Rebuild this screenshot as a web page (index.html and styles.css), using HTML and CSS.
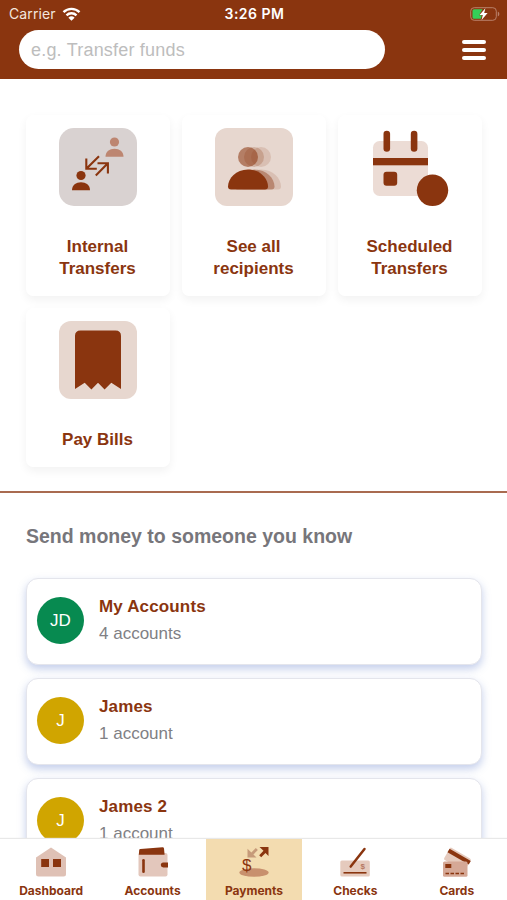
FILE: index.html
```html
<!DOCTYPE html>
<html lang="en">

<head>
    <meta charset="UTF-8">
    <meta name="viewport" content="width=device-width, initial-scale=1.0">
    <title>Payments</title>
    <link rel="stylesheet" href="styles.css">
</head>

<body>
    <header class="header">
        <div class="status-bar">
            <div class="carrier">
                <span>Carrier</span>
                <svg width="19" height="14" viewBox="0 0 18 14" fill="none" stroke="#fff" stroke-width="2.4">
                    <path d="M1 5.1a11.5 11.5 0 0 1 16 0" />
                    <path d="M4 8.3a7.2 7.2 0 0 1 10 0" />
                    <path d="M9 13.8L5.9 10.7a4.5 4.5 0 0 1 6.2 0z" fill="#fff" stroke="none" />
                </svg>
            </div>
            <div class="time">3:26 PM</div>
            <svg class="battery" width="30" height="14" viewBox="0 0 30 14">
                <rect x=".7" y=".7" width="25.6" height="12.6" rx="3.5" fill="none" stroke="#b9806a" />
                <path d="M27.8 4.6v4.8q1.6-.8 1.6-2.4t-1.6-2.4z" fill="#b9806a" />
                <path d="M4 2.3h8.5L9 8.2h2.8l-1 3.5H4a1.5 1.5 0 0 1-1.5-1.5V3.8A1.5 1.5 0 0 1 4 2.3z" fill="#34d058" />
                <path d="M15.4 1.2L9.5 8h3.3l-1.2 5 6-7h-3.4z" fill="#fff" />
            </svg>
        </div>
        <div class="search-row">
            <input class="search" type="text" placeholder="e.g. Transfer funds">
            <button class="menu" aria-label="Menu">
                <span></span>
                <span></span>
                <span></span>
            </button>
        </div>
    </header>

    <main class="content">
        <section class="tiles">
            <div class="tile">
                <svg width="78" height="78" viewBox="0 0 78 78">
                    <rect width="78" height="78" rx="15" fill="#d9d2d1" />
                    <g fill="#bd8671">
                        <circle cx="55.5" cy="14" r="4.6" />
                        <path d="M46.5 28.7c0-5.2 4-8 9-8s9 2.8 9 8z" />
                    </g>
                    <g fill="#8a350f">
                        <circle cx="22" cy="47.5" r="4.6" />
                        <path d="M13 62.2c0-5.2 4-8 9-8s9 2.8 9 8z" />
                    </g>
                    <g fill="none" stroke="#8a350f" stroke-width="2.1">
                        <path d="M40 28.2L27.6 40.6M27.3 30.5v10.3h10.5" />
                        <path d="M36.8 47.4L48.6 35.4M38.5 35.2h10.4v10.4" />
                    </g>
                </svg>
                <div class="tile-label">Internal<br>Transfers</div>
            </div>
            <div class="tile">
                <svg width="78" height="78" viewBox="0 0 78 78">
                    <rect width="78" height="78" rx="12" fill="#e7d7cf" />
                    <g fill="#8a350f">
                        <g opacity=".14">
                            <circle cx="46" cy="29" r="10" />
                            <path d="M26 58.5c0-8 8-17 20-17s20 9 20 17q0 3-3 3H29q-3 0-3-3z" />
                        </g>
                        <circle cx="39" cy="29" r="10" opacity=".22" />
                        <path d="M19.500 58.500c0-8 8-17 20-17s20 9 20 17q0 3-3 3h-34q-3 0-3-3z" opacity=".4" />
                        <circle cx="33" cy="29" r="10" opacity=".55" />
                        <path d="M13 58.500c0-8 8-17 20-17s20 9 20 17q0 3-3 3H16q-3 0-3-3z" />
                    </g>
                </svg>
                <div class="tile-label">See all<br>recipients</div>
            </div>
            <div class="tile">
                <svg width="78" height="78" viewBox="0 0 78 78">
                    <rect x="2" y="13" width="55" height="55" rx="6.500" fill="#ecdcd5" />
                    <g fill="#8a350f">
                        <rect x="2" y="30" width="55" height="7.300" />
                        <rect x="12.500" y="2.800" width="6.600" height="21" rx="3.300" />
                        <rect x="39.800" y="2.800" width="6.600" height="21" rx="3.300" />
                        <rect x="12.500" y="43.700" width="13.700" height="14" rx="3" />
                        <circle cx="61.500" cy="62.300" r="15.700" />
                    </g>
                </svg>
                <div class="tile-label">Scheduled<br>Transfers</div>
            </div>
            <div class="tile">
                <svg width="78" height="78" viewBox="0 0 78 78">
                    <rect width="78" height="78" rx="12" fill="#e7d7cf" />
                    <path d="M16 68V15q0-5.500 5.500-5.500h35Q62 9.500 62 15v53l-9.700-6.200-6.700 6.700-6.600-6.700-6.600 6.700-6.700-6.700z" fill="#8a350f" />
                </svg>
                <div class="tile-label">Pay Bills</div>
            </div>
        </section>

        <section class="people">
            <h2>Send money to someone you know</h2>
            <div class="person">
                <div class="avatar is-green">JD</div>
                <div class="person-info">
                    <div class="person-name">My Accounts</div>
                    <div class="person-count">4 accounts</div>
                </div>
            </div>
            <div class="person">
                <div class="avatar">J</div>
                <div class="person-info">
                    <div class="person-name">James</div>
                    <div class="person-count">1 account</div>
                </div>
            </div>
            <div class="person">
                <div class="avatar">J</div>
                <div class="person-info">
                    <div class="person-name">James 2</div>
                    <div class="person-count">1 account</div>
                </div>
            </div>
        </section>
    </main>

    <nav class="tab-bar">
        <div class="tab">
            <svg width="30" height="30" viewBox="0 0 30 30">
                <path d="M0 10.500L15 .5l15 10V27q0 2.500-2.500 2.500h-25Q0 29.500 0 27z" fill="#dfc1b5" />
                <path d="M5.200 12h7.800v8H5.200zM17 12h8v8h-8z" fill="#8a350f" />
            </svg>
            <span>Dashboard</span>
        </div>
        <div class="tab">
            <svg width="30" height="30" viewBox="0 0 30 30">
                <rect x=".5" y="6" width="29" height="23.500" rx="2" fill="#e3c7bc" />
                <path d="M.8 7.800L1.200 3q.1-1 1.200-1.100L24.500.3q1.300-.1 1.500 1.200l.6 6.300z" fill="#8a350f" />
                <rect x="4.200" y="12" width="2.600" height="14" rx="1.300" fill="#8a350f" />
                <path d="M30 15.500h-4.700a2.500 2.500 0 0 0 0 5H30z" fill="#8a350f" />
            </svg>
            <span>Accounts</span>
        </div>
        <div class="tab active">
            <svg width="30" height="30" viewBox="0 0 30 30">
                <ellipse cx="15" cy="25.500" rx="14.700" ry="4.300" fill="#c8906e" />
                <text class="dollar" x="3" y="24">$</text>
                <path d="M20.500 1h9v9l-3-3-4.300 4.300-2-2L24.500 4.800z" fill="#8a350f" transform="translate(0 -1)" />
                <path d="M8.500 1.700v8.700h9l-3.100-3 4.500-4.300-2.100-2.100-4.400 4.400z" fill="#c69a79" />
            </svg>
            <span>Payments</span>
        </div>
        <div class="tab">
            <svg width="30" height="30" viewBox="0 0 30 30">
                <rect x=".3" y="13.500" width="29.500" height="16" rx="1.500" fill="#e5cabd" />
                <path d="M3.500 25.800h23" stroke="#8a350f" stroke-width="1.600" />
                <text class="dollar small" x="20.500" y="22.300">$</text>
                <path d="M10.700 19.600L24.500 2" stroke="#8a350f" stroke-width="2.500" stroke-linecap="round" />
            </svg>
            <span>Checks</span>
        </div>
        <div class="tab">
            <svg width="30" height="30" viewBox="0 0 30 30">
                <g transform="rotate(30 8 1)">
                    <rect x="8" y="0" width="24" height="14" rx="1.500" fill="#e5cabd" />
                    <rect x="8" y="1.800" width="24.500" height="4.200" fill="#8a350f" />
                </g>
                <rect x="1" y="14.500" width="24.500" height="15.200" rx="1.500" fill="#d5a896" />
                <rect x="3.300" y="17" width="6" height="4" fill="#8a350f" />
                <path d="M3.500 26.500h19" stroke="#8a350f" stroke-width="1.500" stroke-dasharray="3.500 1.500" />
            </svg>
            <span>Cards</span>
        </div>
    </nav>
</body>

</html>
```

FILE: styles.css
```css
* {
    box-sizing: border-box;
}

body {
    margin: 0;
    height: 900px;
    display: flex;
    flex-direction: column;
    overflow: hidden;
    background-color: #fff;
    font-family: "Liberation Sans", Arial, sans-serif;
}

.header {
    flex: none;
    height: 79px;
    background-color: #8a350f;
    color: #fff;
}

.status-bar {
    display: grid;
    grid-template-columns: 1fr auto 1fr;
    align-items: center;
    height: 27px;
    padding: 0 7px 0 9px;
    font-family: Inter, sans-serif;
    font-size: 14px;
}

.carrier {
    display: flex;
    align-items: center;
    gap: 6px;
    color: #f3e5de;
    letter-spacing: 0.1px;
}

.time {
    font-weight: 600;
    letter-spacing: 0.5px;
}

.battery {
    justify-self: end;
}

.search-row {
    display: flex;
    justify-content: space-between;
    align-items: center;
    padding: 3px 21px 0 19px;
}

.search {
    width: 366px;
    height: 39px;
    padding: 2px 12px 0;
    border: none;
    border-radius: 20px;
    background-color: #fff;
    font-family: inherit;
    font-size: 18px;
    letter-spacing: 0.2px;
}

.search::placeholder {
    color: #bdbdbd;
}

.menu {
    display: flex;
    flex-direction: column;
    gap: 4px;
    width: 24px;
    padding: 0;
    border: none;
    background: none;
}

.menu span {
    height: 4px;
    border-radius: 2px;
    background-color: #fff;
}

.content {
    flex: 1;
    min-height: 0;
    overflow: hidden;
}

.tiles {
    display: grid;
    grid-template-columns: repeat(3, 144px);
    gap: 12px;
    padding: 36px 26px 24px;
    border-bottom: 2px solid #a96b50;
}

.tile {
    display: flex;
    flex-direction: column;
    align-items: center;
    gap: 30px;
    padding: 13px 1px 16px 0;
    border-radius: 7px;
    background-color: #fff;
    box-shadow: 0 4px 10px rgba(0, 0, 0, 0.055);
}

.tile-label {
    color: #8a350f;
    font-size: 17px;
    font-weight: bold;
    line-height: 22px;
    text-align: center;
}

.people {
    display: flex;
    flex-direction: column;
    gap: 13px;
    padding: 31px 25px 0 26px;
}

.people h2 {
    margin: 0 0 17px;
    color: #77767b;
    font-size: 19.500px;
    line-height: 24px;
}

.person {
    display: flex;
    flex: none;
    gap: 15px;
    height: 87px;
    padding: 18px 10px 0;
    border: 1px solid #e4e5ec;
    border-radius: 12px;
    background-color: #fff;
    box-shadow: 0 4px 9px rgba(90, 120, 200, 0.36);
}

.avatar {
    width: 47px;
    height: 47px;
    border-radius: 50%;
    background-color: #d0a500;
    color: #fff;
    font-size: 17px;
    line-height: 48px;
    text-align: center;
}

.avatar.is-green {
    background-color: #078a50;
}

.person-name {
    color: #8a350f;
    font-size: 17px;
    font-weight: bold;
    line-height: 20px;
    letter-spacing: 0.15px;
}

.person-count {
    margin-top: 6px;
    color: #808084;
    font-size: 17px;
    line-height: 22px;
}

.tab-bar {
    display: grid;
    grid-template-columns: repeat(5, 1fr);
    flex: none;
    height: 61px;
    background-color: #fff;
    box-shadow: 0 -1px 1px #e8e8e8;
    z-index: 1;
}

.tab {
    display: flex;
    flex-direction: column;
    align-items: center;
    gap: 6px;
    margin: 0 2px 0 3px;
    padding-top: 8px;
    color: #8a350f;
    font-family: Inter, sans-serif;
    font-size: 12px;
    font-weight: 700;
    line-height: 15px;
}

.tab.active {
    background-color: #f3dcb0;
}

.dollar {
    fill: #8a350f;
    font-family: "Liberation Sans", sans-serif;
    font-size: 17px;
    font-weight: normal;
}

.dollar.small {
    fill: #b57761;
    font-size: 8px;
    font-weight: bold;
}
```
